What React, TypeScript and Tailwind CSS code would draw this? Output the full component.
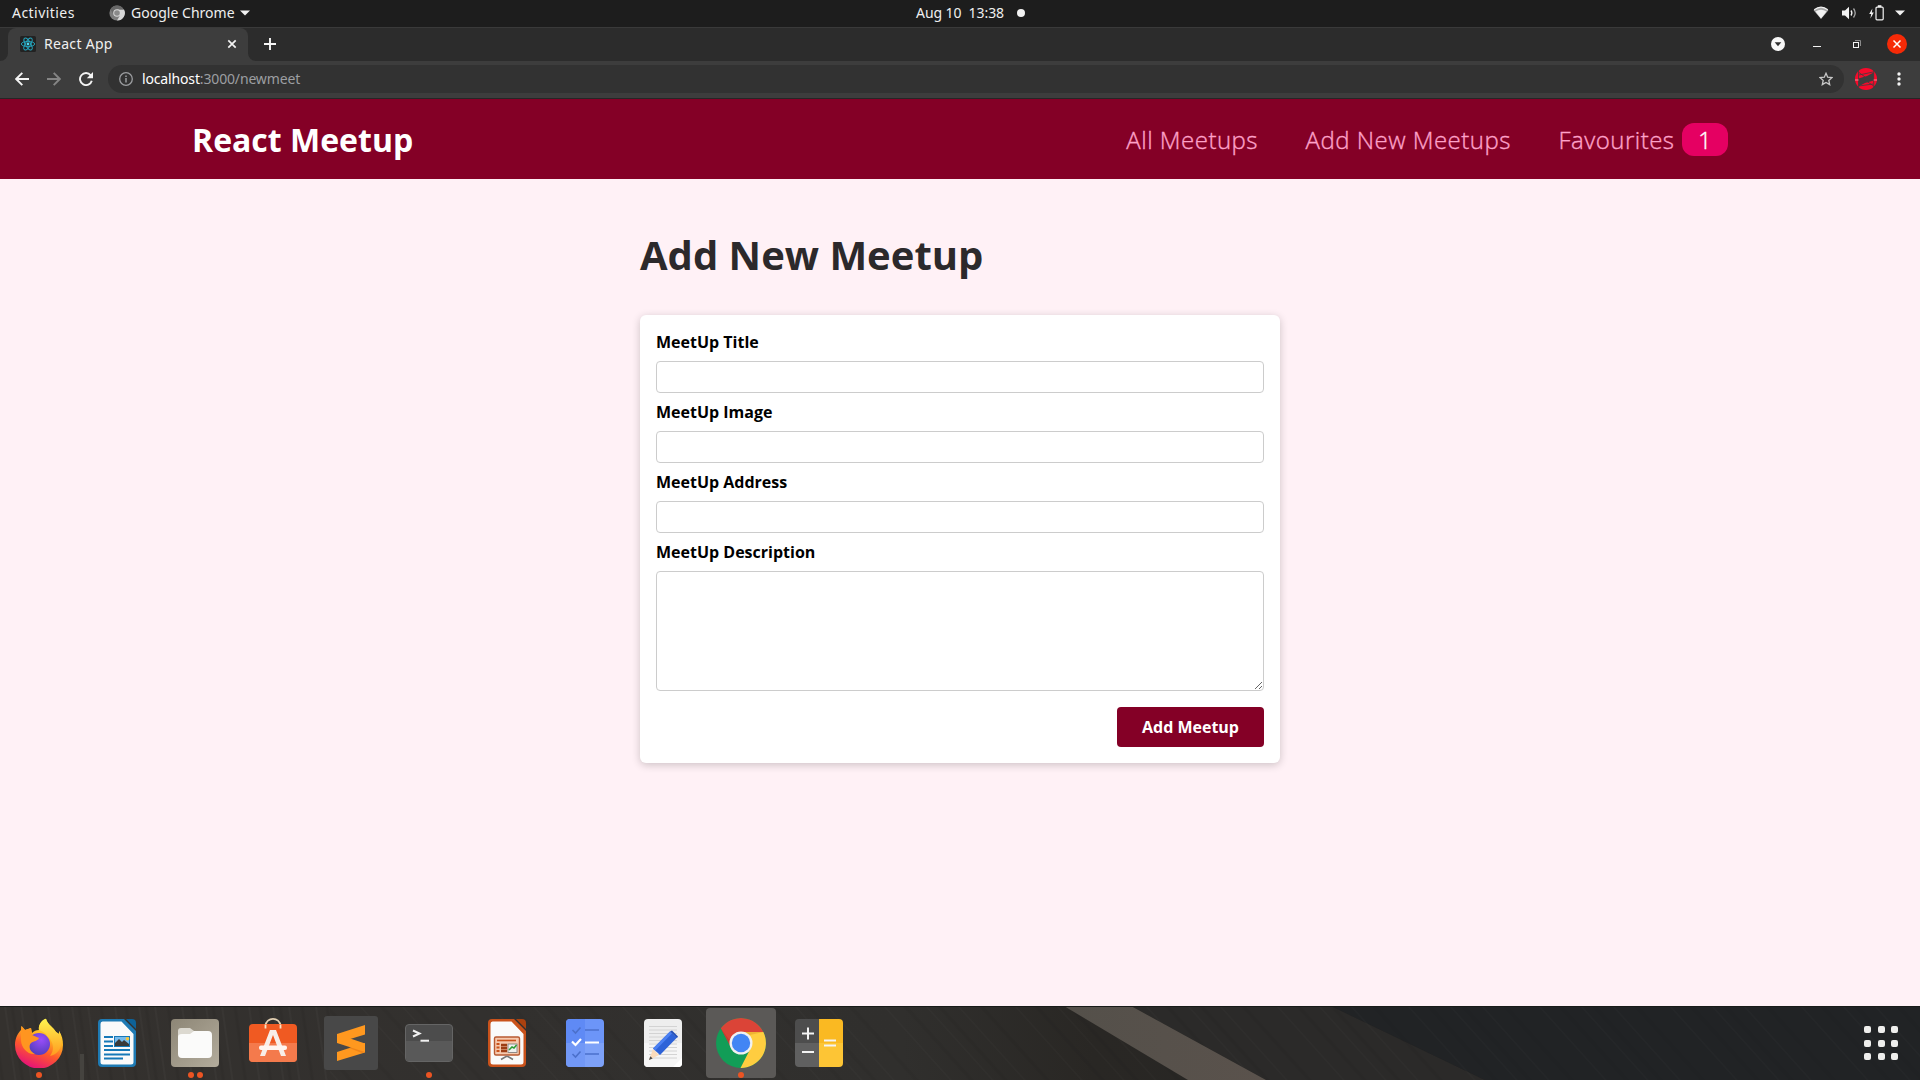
import React from "react";

const UI = "font-['Noto_Sans',sans-serif]";

function SystemBar() {
  return (
    <div className={`${UI} grid h-[28px] grid-cols-3 items-center border-b border-[#3a3a3a] bg-[#1d1d1d] text-[14px] leading-[26px] text-[#efefef]`}>
      <div className="flex items-center pb-px">
        <span className="ml-3 w-[97px] whitespace-nowrap tracking-[0.45px]">Activities</span>
        <svg width="16" height="16" viewBox="0 0 16 16">
          <circle cx="8" cy="8" r="7.6" fill="#7d7d7d" />
          <path d="M8 4.4h7A7.6 7.6 0 0 1 8 15.6l3.2-5.6z" fill="#d6d6d6" />
          <path d="M1.4 4.2A7.6 7.6 0 0 1 14.7 4.4H8L4.8 10z" fill="#686868" />
          <circle cx="8" cy="8" r="3.8" fill="#d8d8d8" />
          <circle cx="8" cy="8" r="2.8" fill="#8a8a8a" />
        </svg>
        <span className="ml-[6px] w-[105px] whitespace-nowrap tracking-[0.02px]">Google Chrome</span>
        <svg width="10" height="6" viewBox="0 0 10 6" className="ml-1"><path d="M0 0.5h10L5 5.5z" fill="#f2f2f2" /></svg>
      </div>
      <div className="flex items-center pb-px pl-[276px]">
        <span className="w-[89px] whitespace-pre tracking-[-0.07px]">Aug 10  13:38</span>
        <span className="ml-[12px] size-2 rounded-full bg-[#f2f2f2]" />
      </div>
      <div className="flex items-center justify-end pb-px pr-[15px]">
        <svg width="16" height="14" viewBox="0 0 16 14" className="mr-[13px]">
          <path d="M0.6 4.2Q8-2.2 15.4 4.2L8 13z" fill="#a9a9a9" />
          <path d="M1.2 3.8Q8-1.5 14.8 3.8" fill="none" stroke="#f2f2f2" strokeWidth="1.2" />
          <path d="M2.5 5.6Q8 1.8 13.5 5.6L8 12.6z" fill="#f2f2f2" />
        </svg>
        <svg width="15" height="14" viewBox="0 0 15 14" className="mr-[12px]">
          <path d="M0 4.5h3L7 0.8v12.4L3 9.5H0z" fill="#f2f2f2" />
          <path d="M9 4.5q1.8 2.5 0 5" fill="none" stroke="#f2f2f2" strokeWidth="1.3" />
          <path d="M11.5 2.5q3.4 4.5 0 9" fill="none" stroke="#a8a8a8" strokeWidth="1.3" />
        </svg>
        <svg width="15" height="16" viewBox="0 0 15 16" className="mr-[11px]">
          <path d="M3.4 3.5L0.2 9h2l-.8 4.5L4.8 7.5h-2z" fill="#f2f2f2" />
          <rect x="7" y="2.2" width="7.2" height="12.6" rx="1" fill="none" stroke="#f2f2f2" strokeWidth="1.2" />
          <rect x="8.8" y="0.2" width="3.6" height="1.8" fill="#f2f2f2" />
        </svg>
        <svg width="10" height="6" viewBox="0 0 10 6"><path d="M0 0.5h10L5 5.5z" fill="#f2f2f2" /></svg>
      </div>
    </div>
  );
}

function TabStrip() {
  return (
    <div className={`${UI} flex h-[33px] items-center bg-[#2c2c2c]`}>
      <svg width="8" height="33" viewBox="0 0 8 33"><path d="M8 25a8 8 0 0 1-8 8h8z" fill="#3d3d3d" /></svg>
      <div className="flex h-[33px] w-[240px] items-center rounded-t-lg bg-[#3d3d3d] pb-px pl-3 pr-[11px]">
        <svg width="16" height="16" viewBox="0 0 16 16">
          <rect width="16" height="16" rx="1.5" fill="#222222" />
          <g fill="none" stroke="#25a9c2" strokeWidth="0.9">
            <ellipse cx="8" cy="8" rx="6.7" ry="2.6" />
            <ellipse cx="8" cy="8" rx="6.7" ry="2.6" transform="rotate(60 8 8)" />
            <ellipse cx="8" cy="8" rx="6.7" ry="2.6" transform="rotate(120 8 8)" />
          </g>
          <circle cx="8" cy="8" r="1.4" fill="#4fd8ee" />
        </svg>
        <span className="ml-2 flex-1 whitespace-nowrap text-[14px] leading-[32px] tracking-[0.3px] text-[#f0f0f0]">React App</span>
        <svg width="10" height="10" viewBox="0 0 10 10"><path d="M1.3 1.3l7.4 7.4M8.7 1.3l-7.4 7.4" stroke="#f2f2f2" strokeWidth="1.7" /></svg>
      </div>
      <svg width="8" height="33" viewBox="0 0 8 33"><path d="M0 25a8 8 0 0 0 8 8H0z" fill="#3d3d3d" /></svg>
      <svg width="12" height="12" viewBox="0 0 12 12" className="mb-px ml-2"><path d="M6 0v12M0 6h12" stroke="#f6f6f6" strokeWidth="1.9" /></svg>
      <div className="ml-auto flex items-center pb-px pr-[13px]">
        <svg width="14" height="14" viewBox="0 0 14 14"><circle cx="7" cy="7" r="7" fill="#f7f7f7" /><path d="M3.7 5.2h6.6L7 9.2z" fill="#2c2c2c" /></svg>
        <span className="ml-[28px] mt-[5px] h-px w-2 bg-[#f2f2f2]" />
        <svg width="8" height="8" viewBox="0 0 8 8" className="ml-[32px]">
          <path d="M2 .5h5.5V6" fill="none" stroke="#8b8b8b" />
          <rect x=".5" y="2.5" width="5" height="5" fill="none" stroke="#f4f4f4" />
        </svg>
        <svg width="20" height="20" viewBox="0 0 20 20" className="ml-[26px]"><circle cx="10" cy="10" r="10" fill="#f62a07" /><path d="M6.5 6.5l7 7M13.5 6.5l-7 7" stroke="#fff" strokeWidth="1.5" /></svg>
      </div>
    </div>
  );
}

function Toolbar() {
  return (
    <div className={`${UI} flex h-[38px] items-center border-b border-[#262626] bg-[#3d3d3d] pb-px pl-[15px] pr-[19px]`}>
      <svg width="14" height="14" viewBox="0 0 14 14"><path d="M14 7H1.5M7.3 .8L1.2 7l6.1 6.2" fill="none" stroke="#f4f4f4" strokeWidth="1.9" /></svg>
      <svg width="14" height="14" viewBox="0 0 14 14" className="ml-[18px]"><path d="M0 7h12.5M6.7 .8L12.8 7l-6.1 6.2" fill="none" stroke="#858585" strokeWidth="1.9" /></svg>
      <svg width="14" height="14" viewBox="0 0 14 14" className="ml-[18px]"><path d="M11.7 3.3A6 6 0 1 0 12.8 8.7" fill="none" stroke="#f4f4f4" strokeWidth="1.9" /><path d="M14 0v6.2H7.8z" fill="#f4f4f4" /></svg>
      <div className="ml-[15px] flex h-7 flex-1 items-center rounded-full bg-[#323232] pl-[11px] pr-[11px]">
        <svg width="14" height="14" viewBox="0 0 14 14"><circle cx="7" cy="7" r="6.3" fill="none" stroke="#9b9da0" strokeWidth="1.3" /><path d="M7 6v4.5M7 3.4v1.5" stroke="#9b9da0" strokeWidth="1.5" /></svg>
        <span className="ml-[9px] text-[14px] leading-7 tracking-[-0.15px] text-[#9c9ea1]"><span className="text-white">localhost</span>:3000/newmeet</span>
        <svg width="14" height="14" viewBox="0 0 14 14" className="ml-auto"><path d="M7 1.3l1.7 3.9 4.3.4-3.2 2.8.9 4.2L7 10.4l-3.7 2.2.9-4.2L1 5.6l4.3-.4z" fill="none" stroke="#c8c8c8" strokeWidth="1.3" /></svg>
      </div>
      <svg width="22" height="22" viewBox="0 0 22 22" className="ml-[11px]">
        <circle cx="11" cy="11" r="11" fill="#f70a2b" />
        <path d="M3.5 10.5L12 8l6.7-3.5v8L10 15l-6.5 3.5z" fill="#3d3d3d" />
        <path d="M3.5 2.5v17M18.7 2.5v17M4 4.5l6 4.5M18 17.5l-6-4M4 7l14-3M4 18l14-2" fill="none" stroke="#3d3d3d" strokeWidth=".8" />
        <path d="M0 12h3.5M18.7 12H22" stroke="#f78a96" />
      </svg>
      <svg width="4" height="14" viewBox="0 0 4 14" className="ml-5"><g fill="#f4f4f4"><circle cx="2" cy="2" r="1.7" /><circle cx="2" cy="7" r="1.7" /><circle cx="2" cy="12" r="1.7" /></g></svg>
    </div>
  );
}

function SiteHeader() {
  return (
    <header className="flex h-20 items-center justify-between bg-[#840026] px-[10%]">
      <div className="pt-0.5 text-[32px] font-bold leading-[44px] text-white">React Meetup</div>
      <nav>
        <ul className="flex items-center gap-[47.5px] text-2xl font-light leading-[33px] tracking-[0.49px] text-[#fea2c9] [-webkit-text-stroke:0.35px_currentColor]">
          <li>All Meetups</li>
          <li>Add New Meetups</li>
          <li className="flex">
            Favourites
            <span className="ml-[7.5px] w-[46px] rounded-xl bg-[#e50062] text-center text-white">1</span>
          </li>
        </ul>
      </nav>
    </header>
  );
}

function Field({ label }: { label: string }) {
  return (
    <div className="mb-2">
      <label className="mb-2 block text-base font-bold leading-[22px]">{label}</label>
      <input type="text" className="block h-8 w-full rounded border border-[#ccc] bg-white p-1" />
    </div>
  );
}

function NewMeetup() {
  return (
    <main className="mx-auto w-[640px] pt-[49px]">
      <h1 className="mb-[33px] text-[40px] font-bold leading-[54px] text-[#2c292b]">Add New Meetup</h1>
      <form className="rounded-md bg-white p-4 text-black shadow-[0_2px_8px_rgba(0,0,0,0.2)]">
        <Field label="MeetUp Title" />
        <Field label="MeetUp Image" />
        <Field label="MeetUp Address" />
        <label className="mb-2 block text-base font-bold leading-[22px]">MeetUp Description</label>
        <textarea className="block h-[120px] w-full resize rounded border border-[#ccc] bg-white p-1" />
        <div className="mt-4 flex justify-end">
          <button type="button" className="h-10 rounded bg-[#840026] px-[25px] text-base font-bold text-white">Add Meetup</button>
        </div>
      </form>
    </main>
  );
}

function Firefox() {
  return (
    <svg width="50" height="50" viewBox="0 0 50 50">
      <defs>
        <linearGradient id="ffBody" x1=".75" y1="0.05" x2=".35" y2="1"><stop offset="0" stopColor="#fff23a" /><stop offset=".35" stopColor="#ffb020" /><stop offset=".62" stopColor="#ff5a2b" /><stop offset="1" stopColor="#e5107a" /></linearGradient>
        <radialGradient id="ffCore" cx=".6" cy=".3" r=".8"><stop offset="0" stopColor="#9a4dfa" /><stop offset="1" stopColor="#4a3bb5" /></radialGradient>
        <linearGradient id="ffTail" x1="0" y1="0" x2="0" y2="1"><stop offset="0" stopColor="#fff44f" /><stop offset="1" stopColor="#ff9a1f" /></linearGradient>
      </defs>
      <path d="M1 27C1 20 4 15 7 12L7.5 8 11 12 17 10 18 15C20 13 22 12 25 12C24 7 28 2 32 .8C33 6 39 9 42 14L45 16 45 13C48 17 49 22 49 27A24 23.5 0 0 1 1 27z" fill="url(#ffBody)" />
      <circle cx="25" cy="26" r="11" fill="url(#ffCore)" />
      <path d="M7 12L7.5 8 11 12 17 10 18 17 25 20C24 23 20 23 17 25C14 28 16 34 21 36C14 37 7 30 7 22z" fill="#ff9520" />
      <path d="M25 12C24 7 28 2 32 .8C33 6 39 9 42 14L45 16 45 13C51 25 46 36 36 38C42 30 38 22 33 18C33 16 30 14 25 12z" fill="url(#ffTail)" />
    </svg>
  );
}

function Writer() {
  return (
    <svg width="38" height="48" viewBox="0 0 38 48">
      <path d="M4 0h22l12 12v32a4 4 0 0 1-4 4H4a4 4 0 0 1-4-4V4a4 4 0 0 1 4-4z" fill="#1e7ab3" />
      <path d="M28 0h6a4 4 0 0 1 4 4v6z" fill="#0e6298" />
      <path d="M4.5 2.5h19L35.5 15v28a2.5 2.5 0 0 1-2.5 2.5H5A2.5 2.5 0 0 1 2.5 43V5a2.5 2.5 0 0 1 2-2.5z" fill="#fafafa" />
      <path d="M6 18h9M6 22.5h9M6 27h9M6 31h26M6 35.5h26M6 39.5h19" stroke="#1679b8" strokeWidth="1.8" />
      <rect x="16.5" y="17.5" width="15" height="10" fill="#76bbec" stroke="#1679b8" />
      <circle cx="29.5" cy="19.8" r="1.8" fill="#f6c63a" />
      <path d="M17 27v-3l4-4 3 3 2-2 5 4v2z" fill="#3a3a3a" />
    </svg>
  );
}

function Files() {
  return (
    <svg width="48" height="48" viewBox="0 0 48 48">
      <defs><linearGradient id="files" x1="0" y1="0" x2="1" y2="1"><stop offset="0" stopColor="#8d8676" /><stop offset="1" stopColor="#b3ac9c" /></linearGradient></defs>
      <rect width="48" height="48" rx="4" fill="url(#files)" />
      <path d="M7 18v-6a3 3 0 0 1 3-3h9l4 3v6z" fill="#dcd9d0" />
      <path d="M7 18q0-3 4-3h8l4-3h14q4 0 4 4v19q0 4-4 4H11q-4 0-4-4z" fill="#fbfbfa" />
    </svg>
  );
}

function Software() {
  return (
    <svg width="48" height="52" viewBox="0 -4 48 52">
      <path d="M16.5 5C17-4.5 31-4.5 31.5 5" fill="none" stroke="#e2cfb2" strokeWidth="1.8" />
      <rect y="3" width="48" height="38" rx="4" fill="#f05a22" />
      <path d="M0 22h48v15a4 4 0 0 1-4 4H4a4 4 0 0 1-4-4z" fill="#f47a4c" />
      <path d="M16.5 7.5V3.5M31.5 7.5V3.5" stroke="#f7e3c5" strokeWidth="1.8" />
      <path d="M21 9h6L37 35h-5L24 14l-8 21h-5z" fill="#f8eee8" />
      <rect x="10" y="24.5" width="28" height="4.5" rx="2" fill="#fff5f0" />
    </svg>
  );
}

function Sublime() {
  return (
    <svg width="54" height="54" viewBox="0 0 54 54">
      <rect width="54" height="54" rx="3" fill="#484848" />
      <path d="M13 36L41 27v9.5L13 45z" fill="#ff981f" />
      <path d="M25 32L41 28v8l-3 1z" fill="#ef8418" />
      <path d="M13 18v9l28 9V27.5z" fill="#ff981f" />
      <path d="M13 18L41 9v9.5L13 27z" fill="#ff981f" />
    </svg>
  );
}

function Terminal() {
  return (
    <svg width="48" height="48" viewBox="0 0 48 48">
      <rect x=".5" y="5.5" width="47" height="37" rx="3.5" fill="#4c4c4c" stroke="#656565" />
      <path d="M1 22h46v17a3 3 0 0 1-3 3H4a3 3 0 0 1-3-3z" fill="#595959" />
      <path d="M8 11.5l6.5 3L8 17.5" fill="none" stroke="#f1f1f1" strokeWidth="2" /><path d="M15.5 21.7H24" stroke="#f1f1f1" strokeWidth="2" />
    </svg>
  );
}

function Impress() {
  return (
    <svg width="38" height="48" viewBox="0 0 38 48">
      <path d="M4 0h22l12 12v32a4 4 0 0 1-4 4H4a4 4 0 0 1-4-4V4a4 4 0 0 1 4-4z" fill="#c9521b" />
      <path d="M28 0h6a4 4 0 0 1 4 4v6z" fill="#aa410f" />
      <path d="M4.5 2.5h19L35.5 15v28a2.5 2.5 0 0 1-2.5 2.5H5A2.5 2.5 0 0 1 2.5 43V5a2.5 2.5 0 0 1 2-2.5z" fill="#fafafa" />
      <rect x="6.5" y="18" width="25" height="18" rx="1.5" fill="#f6c9ae" stroke="#b85a32" strokeWidth="1.4" />
      <path d="M9 21.5h19" stroke="#c9521b" strokeWidth="1.6" />
      <path d="M10 24v10" stroke="#c9521b" strokeWidth="3" strokeDasharray="2 1.5" />
      <path d="M13 26h6M13 29h6M13 32h6" stroke="#9c3d15" strokeWidth="2.4" />
      <rect x="20" y="25" width="9" height="8.5" fill="#f0f0f0" stroke="#777" strokeWidth=".8" />
      <path d="M21 31l3-3 2 1 2.5-3" fill="none" stroke="#2d9e34" strokeWidth="1.5" />
      <path d="M13 40.5l5-3h2l5 3" fill="none" stroke="#777" strokeWidth="1.6" />
    </svg>
  );
}

function Todo() {
  return (
    <svg width="38" height="48" viewBox="0 0 38 48">
      <rect width="38" height="48" rx="4" fill="#6c95f8" />
      <path d="M4 0h15v48H4a4 4 0 0 1-4-4V4a4 4 0 0 1 4-4z" fill="#5f8af5" />
      <path d="M0 24h38v20a4 4 0 0 1-4 4H4a4 4 0 0 1-4-4z" fill="#fff" fillOpacity=".12" />
      <path d="M6.5 11l3 3 5-5.5M19 11h14M6.5 35l3 3 5-5.5M19 35h14" fill="none" stroke="#4b70cb" strokeWidth="1.6" />
      <path d="M6 22.5l3.5 3.5 5.5-6M19 23.5h14" fill="none" stroke="#fff" strokeWidth="2.2" />
    </svg>
  );
}

function Editor() {
  return (
    <svg width="38" height="48" viewBox="0 0 38 48">
      <rect width="38" height="48" rx="4" fill="#eeeeee" />
      <path d="M0 24h38v20a4 4 0 0 1-4 4H4a4 4 0 0 1-4-4z" fill="#f6f6f6" />
      <path d="M5 7.5h28M5 11h28M5 14.5h28M5 18h28M5 21.5h28M5 25h28M5 28.5h28M5 32h28M5 35.5h28M5 39h28" stroke="#cfcfcf" strokeWidth=".9" />
      <path d="M5 41l4-11 6 6z" fill="#fbdcbc" /><path d="M5 41l1.4-3.8 2.2 2.2z" fill="#4a4a4a" />
      <path d="M9 29.5L26 12.5l7 6L16 36z" fill="#2e63d8" />
      <path d="M9 29.5L26 12.5l2.2 1.8-17 17.2z" fill="#4b80f2" />
      <path d="M26 12.5l2-1 6 6-1 1.5z" fill="#2450b8" />
      <path d="M29 48l9-9v5a4 4 0 0 1-4 4z" fill="#fff" />
    </svg>
  );
}

function Chrome() {
  return (
    <svg width="50" height="50" viewBox="0 0 50 50">
      <circle cx="25" cy="25" r="25" fill="#129d57" />
      <path d="M25 14h22.4A25 25 0 0 1 24.5 50L34.5 30.5z" fill="#ffcd40" />
      <path d="M4.8 10.3A25 25 0 0 1 47.4 14H25L15.5 30.5z" fill="#db4437" />
      <path d="M4.8 10.3L15.5 30.5 14 23z" fill="#b5372c" opacity=".6" />
      <path d="M25 14h22.4l-16 3.5z" fill="#e2a42c" opacity=".6" />
      <circle cx="25" cy="25" r="11.5" fill="#f1f1f1" />
      <circle cx="25" cy="25" r="9.2" fill="#4285f4" />
    </svg>
  );
}

function Calculator() {
  return (
    <svg width="48" height="48" viewBox="0 0 48 48">
      <path d="M4 0h20v24H0V4a4 4 0 0 1 4-4z" fill="#4d4d4d" />
      <path d="M0 24h24v24H4a4 4 0 0 1-4-4z" fill="#606060" />
      <path d="M24 0h20a4 4 0 0 1 4 4v20H24z" fill="#fab922" />
      <path d="M24 24h24v20a4 4 0 0 1-4 4H24z" fill="#fdc535" />
      <path d="M13 8.5v12M7 14.5h12M7 33h12M29 21.5h12M29 26.5h12" stroke="#f4f4f4" strokeWidth="2" />
    </svg>
  );
}

const apps = [
  { icon: <Firefox />, dots: 1, active: false },
  { icon: <Writer />, dots: 0, active: false },
  { icon: <Files />, dots: 2, active: false },
  { icon: <Software />, dots: 0, active: false },
  { icon: <Sublime />, dots: 0, active: false },
  { icon: <Terminal />, dots: 1, active: false },
  { icon: <Impress />, dots: 0, active: false },
  { icon: <Todo />, dots: 0, active: false },
  { icon: <Editor />, dots: 0, active: false },
  { icon: <Chrome />, dots: 1, active: true },
  { icon: <Calculator />, dots: 0, active: false },
];

function Wallpaper() {
  return (
    <svg className="absolute inset-0" width="1920" height="74" viewBox="0 0 1920 74" preserveAspectRatio="none">
      <defs>
        <linearGradient id="wall"><stop offset="0" stopColor="#34312e" /><stop offset=".25" stopColor="#32302e" /><stop offset=".47" stopColor="#302f2d" /><stop offset=".57" stopColor="#292724" /><stop offset="1" stopColor="#202224" /></linearGradient>
        <linearGradient id="beam" x1="0" y1="0" x2="1" y2="0"><stop offset="0" stopColor="#54504a" /><stop offset="1" stopColor="#5a524c" /></linearGradient>
        <pattern id="grainSteep" width="67" height="148" patternUnits="userSpaceOnUse" patternTransform="skewX(8)"><path d="M5 0v148M21 0v148M48 0v148" stroke="#fff" strokeOpacity=".025" strokeWidth="2" /><path d="M12 0v148M34 0v148M59 0v148" stroke="#000" strokeOpacity=".06" strokeWidth="3" /></pattern>
        <pattern id="grain" width="131" height="148" patternUnits="userSpaceOnUse" patternTransform="skewX(42)"><path d="M9 0v148M41 0v148M98 0v148" stroke="#fff" strokeOpacity=".015" strokeWidth="2" /><path d="M22 0v148M64 0v148M119 0v148" stroke="#000" strokeOpacity=".04" strokeWidth="5" /></pattern>
      </defs>
      <rect width="1920" height="74" fill="url(#wall)" />
      <path d="M1131 0h200l154 74h-219z" fill="#2b2a29" />
      <path d="M1331 0H1920v74H1485z" fill="#212325" />
      <rect width="330" height="74" fill="url(#grainSteep)" />
      <rect x="330" width="1590" height="74" fill="url(#grain)" />
      <path d="M80 48h4v26h-4z" fill="#45433f" />
      <path d="M1064 0h67l135 74h-78z" fill="url(#beam)" />
      <rect width="1920" height="1" fill="#181b19" />
    </svg>
  );
}

function Dock() {
  return (
    <footer className="relative flex h-[74px] items-stretch overflow-hidden">
      <Wallpaper />
      {apps.map((app, i) => (
        <div key={i} className="relative flex w-[78px] items-center justify-center">
          <div className={app.active ? "flex h-[70px] w-[70px] items-center justify-center rounded bg-[#5b5957]" : "flex h-[70px] w-[70px] items-center justify-center"}>{app.icon}</div>
          <div className="absolute bottom-[2px] flex w-full justify-center gap-[3px]">
            {Array.from({ length: app.dots }, (_, d) => <span key={d} className="size-[6px] rounded-full bg-[#ec5423]" />)}
          </div>
        </div>
      ))}
      <div className="relative ml-auto mr-[22px] grid grid-cols-3 content-center gap-x-[6.5px] gap-y-[6.5px]">
        {Array.from({ length: 9 }, (_, d) => <span key={d} className="size-[7px] rounded-[2px] bg-[#eeeeec]" />)}
      </div>
    </footer>
  );
}

export default function App() {
  return (
    <div className="flex h-[1080px] w-[1920px] flex-col overflow-hidden bg-[#fff1f6] font-['Open_Sans',sans-serif]">
      <SystemBar />
      <TabStrip />
      <Toolbar />
      <SiteHeader />
      <div className="flex-1"><NewMeetup /></div>
      <Dock />
    </div>
  );
}
